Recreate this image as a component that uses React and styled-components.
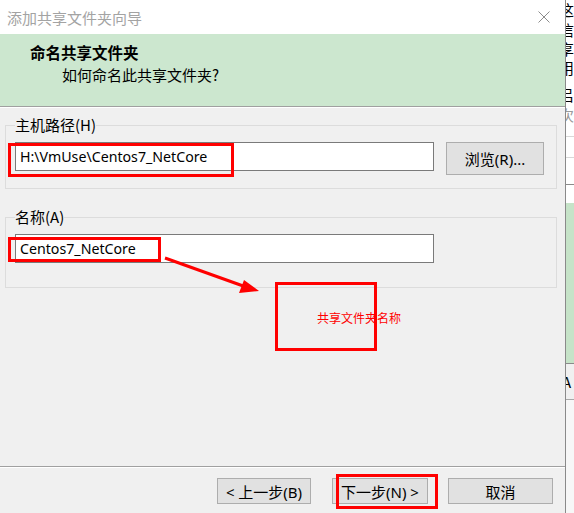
import React from 'react'
import styled, { createGlobalStyle } from 'styled-components'

const GlobalStyle = createGlobalStyle`
  html, body {
    margin: 0;
    padding: 0;
    background: #ffffff;
  }
  body {
    font-family: "Noto Sans", "Noto Sans CJK SC", sans-serif;
    font-size: 14px;
    color: #000;
  }
`

const Screen = styled.div`
  position: relative;
  display: flex;
  width: 574px;
  height: 513px;
  overflow: hidden;
`

const Dialog = styled.div`
  display: flex;
  flex-direction: column;
  width: 565px;
  flex: none;
  background: #f0f0f0;
  border-right: 1px solid #8a8a8a;
`

const TitleBar = styled.div`
  display: flex;
  align-items: center;
  justify-content: space-between;
  height: 34px;
  flex: none;
  padding: 0 15px 0 7px;
  background: #ffffff;
  color: #a3a3a3;
  font-family: "Noto Sans CJK SC", sans-serif;
  font-size: 15px;
`

const Header = styled.div`
  height: 73px;
  flex: none;
  background: #cce7cf;
  border-bottom: 1px solid #a0a0a0;
  box-shadow: 0 1px 0 #ffffff;
  padding: 7px 0 0 30px;
  box-sizing: border-box;
  font-family: "Noto Sans CJK SC", sans-serif;
`

const HeaderTitle = styled.div`
  font-weight: bold;
  font-size: 15.5px;
  line-height: 22px;
`

const HeaderSub = styled.div`
  font-size: 15px;
  line-height: 22px;
  margin: 1px 0 0 32px;
`

const Body = styled.div`
  flex: 1;
  display: flex;
  flex-direction: column;
  gap: 20px;
  padding: 10px 8px 0 5px;
`

const Group = styled.fieldset`
  margin: 0;
  padding: 9px 10px 0 9px;
  height: ${p => p.$height}px;
  box-sizing: border-box;
  border: 1px solid #dcdcdc;
  display: flex;
  align-items: flex-start;
  gap: 12px;

  legend {
    padding: 0;
    margin-left: 0;
    font-family: "Noto Sans CJK SC", sans-serif;
    font-size: 15px;
    line-height: 16px;
    color: #000;
  }
`

const Input = styled.div`
  width: 419px;
  height: 29px;
  flex: none;
  box-sizing: border-box;
  border: 1px solid #7a7a7a;
  background: #ffffff;
  padding: 0 4px;
  display: flex;
  align-items: center;
  font-size: 14.2px;
`

const Button = styled.div`
  display: flex;
  align-items: center;
  justify-content: center;
  flex: none;
  width: ${p => p.$width}px;
  height: ${p => p.$height || 26}px;
  box-sizing: border-box;
  background: #e1e1e1;
  border: 1px solid #adadad;
  font-family: "Noto Sans", "Noto Sans CJK SC", sans-serif;
  font-size: 15px;
  white-space: pre;
`

const Footer = styled.div`
  height: 47px;
  flex: none;
  border-top: 1px solid #a0a0a0;
  box-shadow: inset 0 1px 0 #ffffff;
  display: flex;
  align-items: flex-start;
  padding: 11px 0 0 217px;
  box-sizing: border-box;
`

const FooterGap = styled.div`
  width: ${p => p.$width}px;
  flex: none;
`

const Backdrop = styled.div`
  flex: 1;
  display: flex;
  flex-direction: column;
  background: #ffffff;
  font-family: "Noto Sans CJK SC", sans-serif;
  overflow: hidden;
`

const BackdropText = styled.div`
  height: 136px;
  flex: none;
  margin-left: -7px;
`

const Glyph = styled.div`
  height: ${p => p.$h || 20}px;
  line-height: ${p => p.$h || 20}px;
  font-size: 15px;
  margin-top: ${p => p.$gap || 0}px;
  color: ${p => p.$muted ? '#9a9a9a' : '#000'};
  white-space: nowrap;
  overflow: hidden;
`

const BackdropRow = styled.div`
  height: ${p => p.$height}px;
  flex: none;
  border-top: 1px solid ${p => p.$line || '#d8d8d8'};
  background: ${p => p.$bg || '#ffffff'};
  font-size: 15px;
  line-height: ${p => p.$height}px;
  white-space: nowrap;
  margin-left: ${p => p.$shift || 0}px;
`

const Mark = styled.div`
  position: absolute;
  left: ${p => p.$x}px;
  top: ${p => p.$y}px;
  width: ${p => p.$w}px;
  height: ${p => p.$h}px;
  box-sizing: border-box;
  border: 3px solid #ff0000;
  pointer-events: none;
`

const Note = styled.div`
  position: absolute;
  left: 317px;
  top: 309px;
  color: #ff0000;
  font-family: "Noto Sans CJK SC", sans-serif;
  font-size: 12px;
  line-height: 18px;
`

const Arrow = styled.svg`
  position: absolute;
  left: 0;
  top: 0;
  pointer-events: none;
`

function CloseIcon() {
  return (
    <svg width="12" height="12" viewBox="0 0 12 12">
      <path d="M0.5 0.5 L11.5 11.5 M11.5 0.5 L0.5 11.5" stroke="#8c8c8c" strokeWidth="1" />
    </svg>
  )
}

export default function App() {
  return (
    <>
      <GlobalStyle />
      <Screen>
        <Dialog>
          <TitleBar>
            <span>添加共享文件夹向导</span>
            <CloseIcon />
          </TitleBar>
          <Header>
            <HeaderTitle>命名共享文件夹</HeaderTitle>
            <HeaderSub>如何命名此共享文件夹?</HeaderSub>
          </Header>
          <Body>
            <Group $height={72}>
              <legend>主机路径(H)</legend>
              <Input>H:\VmUse\Centos7_NetCore</Input>
              <Button $width={98} $height={33}>浏览(R)...</Button>
            </Group>
            <Group $height={79}>
              <legend>名称(A)</legend>
              <Input>Centos7_NetCore</Input>
            </Group>
          </Body>
          <Footer>
            <Button $width={94}>{'< 上一步(B)'}</Button>
            <FooterGap $width={21} />
            <Button $width={96}>{'下一步(N) >'}</Button>
            <FooterGap $width={20} />
            <Button $width={105}>取消</Button>
          </Footer>
        </Dialog>
        <Backdrop>
          <BackdropText>
            <Glyph>这</Glyph>
            <Glyph>信</Glyph>
            <Glyph $h={18}>享</Glyph>
            <Glyph>用</Glyph>
            <Glyph $gap={7}>吕</Glyph>
            <Glyph $muted>次</Glyph>
          </BackdropText>
          <BackdropRow $height={20} />
          <BackdropRow $height={26} />
          <BackdropRow $height={17} $line="#8a8a8a" />
          <BackdropRow $height={160} $bg="#c6e3c8" $line="#ffffff" />
          <BackdropRow $height={35} $bg="#f0f0f0" $line="#8a8a8a" $shift={-4}>A</BackdropRow>
          <BackdropRow $height={120} $line="#a8a8a8" $bg="#f7f7f7" />
        </Backdrop>

        <Mark $x={8} $y={143} $w={226} $h={34} />
        <Mark $x={8} $y={237} $w={153} $h={25} />
        <Mark $x={275} $y={282} $w={102} $h={69} />
        <Mark $x={336} $y={474} $w={102} $h={35} />
        <Note>共享文件夹名称</Note>
        <Arrow width="574" height="513">
          <line x1="165" y1="258" x2="246" y2="287" stroke="#ff0000" strokeWidth="3" />
          <polygon points="259,291 239,293 244,280" fill="#ff0000" />
        </Arrow>
      </Screen>
    </>
  )
}
